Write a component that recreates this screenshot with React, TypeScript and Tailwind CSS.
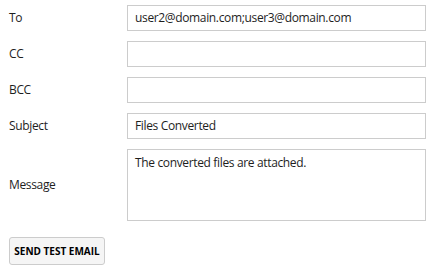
const fields = [
  { label: "To", value: "user2@domain.com;user3@domain.com" },
  { label: "CC", value: "" },
  { label: "BCC", value: "" },
  { label: "Subject", value: "Files Converted" },
]

export default function App() {
  return (
    <div className="w-[441px] h-[274px] bg-white pl-[9px] pt-[5px] text-[12px] tracking-[-0.35px] text-[#1e1e1e]" style={{ fontFamily: '"Open Sans", "Noto Sans", sans-serif' }}>
      <div className="flex flex-col gap-[10px] w-[417px]">
        {fields.map((f) => (
          <div key={f.label} className="flex items-center h-[26px]">
            <span className="w-[118px] shrink-0">{f.label}</span>
            <div className="flex-1 h-[26px] border border-[#cccccc] flex items-center px-[7px]">{f.value}</div>
          </div>
        ))}
        <div className="flex items-center h-[72px]">
          <span className="w-[118px] shrink-0">Message</span>
          <div className="flex-1 h-[72px] border border-[#cccccc] px-[7px] pt-[4px]">The converted files are attached.</div>
        </div>
      </div>
      <button className="mt-[16px] h-[28px] w-[96px] border border-[#cccccc] rounded-[3px] bg-[#f5f5f5] text-[10px] tracking-normal font-bold text-black">
        SEND TEST EMAIL
      </button>
    </div>
  )
}
